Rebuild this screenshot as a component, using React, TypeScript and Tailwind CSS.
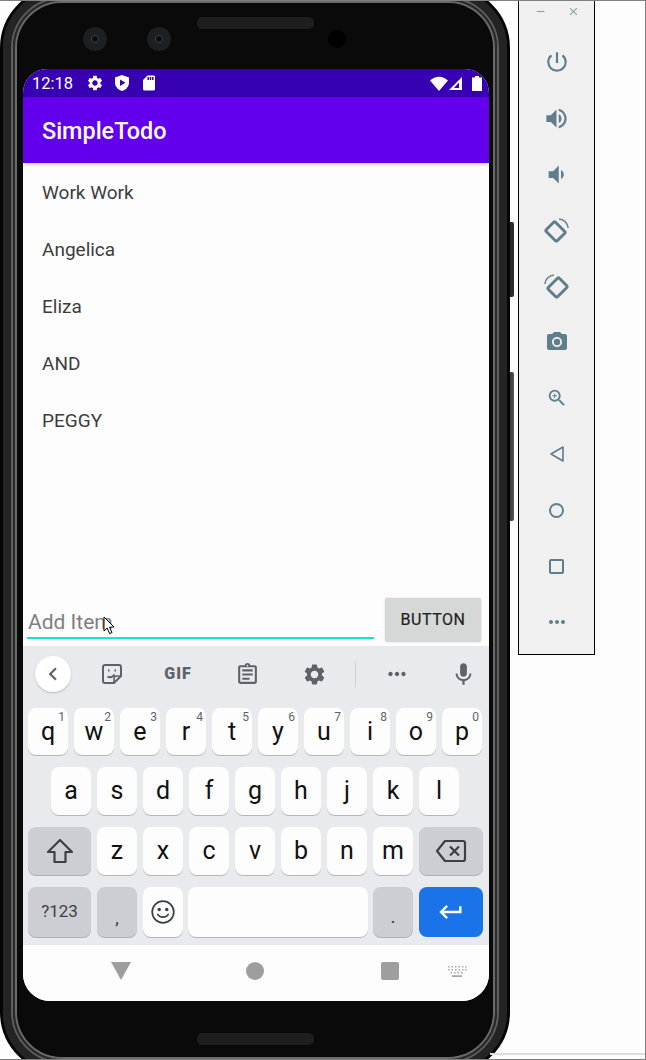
import { MdSettings, MdSdCard, MdPowerSettingsNew, MdVolumeUp, MdVolumeDown, MdPhotoCamera, MdZoomIn, MdMoreHoriz, MdChevronLeft, MdMic, MdOutlineAssignment, MdKeyboardReturn, MdClose, MdRemove } from 'react-icons/md';

const todos = ['Work Work', 'Angelica', 'Eliza', 'AND', 'PEGGY'];
const row1 = [['q', '1'], ['w', '2'], ['e', '3'], ['r', '4'], ['t', '5'], ['y', '6'], ['u', '7'], ['i', '8'], ['o', '9'], ['p', '0']];
const row2 = ['a', 's', 'd', 'f', 'g', 'h', 'j', 'k', 'l'];
const row3 = ['z', 'x', 'c', 'v', 'b', 'n', 'm'];

function Key({ label, hint }: { label: string; hint?: string }) {
  return (
    <div className="relative flex h-full w-[40px] items-center justify-center rounded-[8px] bg-[#fdfdfd] pb-[1px] text-[25px] leading-none text-[#111] shadow-[0_1px_0_#b4b6ba]">
      {label}
      {hint && <span className="absolute right-[3px] top-[3px] text-[12px] leading-none text-[#5f6368]">{hint}</span>}
    </div>
  );
}

function GrayKey({ className, children }: { className: string; children: React.ReactNode }) {
  return (
    <div className={`flex h-full items-center justify-center rounded-[8px] bg-[#ccced4] text-[#3c4043] shadow-[0_1px_0_#aeb0b5] ${className}`}>
      {children}
    </div>
  );
}

function RotateIcon({ flip }: { flip?: boolean }) {
  return (
    <svg width="25" height="25" viewBox="0 0 24 24" fill="none" stroke="#607d8b" className={flip ? '-scale-x-100' : ''}>
      <rect x="4.700" y="5.500" width="12.600" height="15" rx="1.200" strokeWidth="2.800" transform="rotate(-45 11 13)" />
      <path d="M14.500 1 C19 1.300 22.800 5 23.200 9.600" strokeWidth="1.400" />
    </svg>
  );
}

function PanelCell({ children }: { children: React.ReactNode }) {
  return <div className="flex h-[56px] items-center justify-center text-[#607d8b]">{children}</div>;
}

function Speaker() {
  return <div className="h-[12px] w-[117px] rounded-[5px] bg-[#1e1e1e]" />;
}

function Camera() {
  return (
    <div className="flex h-[24px] w-[24px] items-center justify-center rounded-full bg-[#1c2023]">
      <div className="h-[8px] w-[8px] rounded-full border border-[#3f4245] bg-[#0c0c0c]" />
    </div>
  );
}

function StatusBar() {
  return (
    <div className="flex h-[28px] items-center bg-[#3700b3] pl-[9px] text-white">
      <span className="w-[54px] pt-[2px] text-[16.5px] leading-none">12:18</span>
      <MdSettings size={18} />
      <svg width="16" height="18" viewBox="0 0 16 18" className="ml-[10px]" fill="#fff">
        <path d="M8 1 L15 3.600 V8.500 C15 12.600 12 15.900 8 17 C4 15.900 1 12.600 1 8.500 V3.600 Z" />
        <path d="M6 5.600 L11.500 8.800 L6 12 Z" fill="#3700b3" />
      </svg>
      <MdSdCard size={18} className="ml-[10px]" />
      <div className="ml-auto mr-[7px] flex items-center">
        <svg width="18" height="15" viewBox="0 0 18 15" fill="#fff"><path d="M0 4.500 C5 -0.600 13 -0.600 18 4.500 L9 15 Z" /></svg>
        <svg width="15" height="15" viewBox="0 0 15 15" fill="none">
          <path d="M14 1 V14 H1 Z" fill="#fff" />
          <path d="M11 6.500 V12 H6 Z" fill="#3700b3" />
          <path d="M12 5 H14 V14 H12 Z" fill="#fff" />
        </svg>
        <svg width="10" height="15" viewBox="0 0 10 15" className="ml-[9px]" fill="#fff"><path d="M3 0 H7 V1.500 H10 V15 H0 V1.500 H3 Z" /></svg>
      </div>
    </div>
  );
}

function InputRow() {
  return (
    <div className="relative flex h-[51px] shrink-0 items-start pl-[4px]">
      <input
        readOnly
        placeholder="Add Item"
        className="mt-[11px] h-[33px] w-[347px] border-b-[2px] border-[#12e6cf] bg-transparent pl-[1px] text-[21px] outline-none placeholder:text-[#808080]"
      />
      <button className="ml-[11px] mt-[3px] h-[44px] w-[96px] rounded-[2px] bg-[#d6d7d7] text-[16px] tracking-[0.5px] text-[#222] [-webkit-text-stroke:0.2px_#222] shadow-[0_0_2px_#cfcfcf]">
        BUTTON
      </button>
      <svg width="13" height="19" viewBox="0 0 13 19" className="absolute left-[80px] top-[21px]" fill="#fff" stroke="#000" strokeWidth="1">
        <path d="M1 1 V15 L4.200 12 L6.600 17.600 L9 16.600 L6.600 11.200 L11 11 Z" />
      </svg>
    </div>
  );
}

function Toolbar() {
  return (
    <div className="flex h-[62px] items-center pb-[6px] pl-[12px] text-[#5f6368]">
      <div className="flex h-[36px] w-[36px] items-center justify-center rounded-full bg-white shadow-[0_1px_2px_#b9bbbf]">
        <MdChevronLeft size={26} />
      </div>
      <div className="ml-[16px] flex w-[50px] justify-center">
        <svg width="22" height="22" viewBox="0 0 22 22" fill="none" stroke="#5f6368" strokeWidth="2">
          <path d="M4 2 H18 C19.200 2 20 2.800 20 4 V13 L13 20 H4 C2.800 20 2 19.200 2 18 V4 C2 2.800 2.800 2 4 2 Z" />
          <path d="M13 20 V15.500 C13 14 14 13 15.500 13 H20" strokeWidth="1.600" />
          <path d="M6.500 13.500 C9 15 12 14 13.500 11.500" />
          <path d="M7 7.500 H8.500 M13.500 7.500 H15" strokeWidth="2.200" />
        </svg>
      </div>
      <div className="ml-[16px] flex w-[50px] justify-center text-[16px] font-black tracking-[1px]">GIF</div>
      <div className="ml-[19px] flex w-[50px] justify-center"><MdOutlineAssignment size={25} /></div>
      <div className="ml-[17px] flex w-[50px] justify-center"><MdSettings size={25} /></div>
      <div className="ml-[16px] h-[26px] w-[1px] bg-[#cfd1d5]" />
      <div className="ml-[16px] flex w-[50px] justify-center"><MdMoreHoriz size={26} /></div>
      <div className="ml-[16px] flex w-[50px] justify-center"><MdMic size={27} /></div>
    </div>
  );
}

function Keyboard() {
  return (
    <div className="shrink-0 bg-[#e8eaed]">
      <Toolbar />
      <div className="flex h-[229px] flex-col gap-[12px] px-[5px]">
        <div className="flex h-[47px] gap-[6px]">
          {row1.map(([k, h]) => <Key key={k} label={k} hint={h} />)}
        </div>
        <div className="flex h-[48px] gap-[6px] pl-[23px]">
          {row2.map((k) => <Key key={k} label={k} />)}
        </div>
        <div className="flex h-[48px] gap-[6px]">
          <GrayKey className="w-[63px]">
            <svg width="28" height="26" viewBox="0 0 28 26" fill="none" stroke="#3c4043" strokeWidth="2.200" strokeLinejoin="round"><path d="M14 2 L26 14 H19.500 V24 H8.500 V14 H2 Z" /></svg>
          </GrayKey>
          {row3.map((k) => <Key key={k} label={k} />)}
          <GrayKey className="w-[64px]">
            <svg width="32" height="24" viewBox="0 0 32 24" fill="none" stroke="#3c4043" strokeWidth="2.200" strokeLinejoin="round">
              <path d="M10 2 H28 C29.200 2 30 2.800 30 4 V20 C30 21.200 29.200 22 28 22 H10 L2 12 Z" />
              <path d="M15 7.500 L24 16.500 M24 7.500 L15 16.500" />
            </svg>
          </GrayKey>
        </div>
        <div className="flex h-[50px] gap-[6px]">
          <GrayKey className="w-[63px] text-[17px]">?123</GrayKey>
          <GrayKey className="w-[40px] pt-[13px] text-[16px] font-medium leading-none">,</GrayKey>
          <div className="flex h-full w-[40px] items-center justify-center rounded-[8px] bg-[#fdfdfd] shadow-[0_1px_0_#b4b6ba]">
            <svg width="24" height="24" viewBox="0 0 24 24" fill="none" stroke="#3c4043" strokeWidth="1.700">
              <circle cx="12" cy="12" r="10.800" />
              <circle cx="8.200" cy="9.500" r="0.900" fill="#3c4043" />
              <circle cx="15.800" cy="9.500" r="0.900" fill="#3c4043" />
              <path d="M6.800 14.500 C8.500 18 15.500 18 17.200 14.500" strokeLinecap="round" />
            </svg>
          </div>
          <div className="h-full w-[180px] -ml-[1px] rounded-[8px] bg-[#fdfdfd] shadow-[0_1px_0_#b4b6ba]" />
          <GrayKey className="-ml-[1px] w-[40px] pt-[11px] text-[14px] font-bold leading-none">.</GrayKey>
          <div className="flex h-full w-[64px] items-center justify-center rounded-[8px] bg-[#1a73e8] text-white">
            <MdKeyboardReturn size={28} />
          </div>
        </div>
      </div>
      <div className="h-[8px]" />
    </div>
  );
}

function NavBar() {
  return (
    <div className="flex h-[56px] shrink-0 items-center bg-[#fdfdfd] pb-[4px] pl-[88px]">
      <svg width="20" height="18" viewBox="0 0 20 18" fill="#9e9e9e"><path d="M0 0 H20 L10 18 Z" /></svg>
      <div className="ml-[115px] h-[18px] w-[18px] rounded-full bg-[#9e9e9e]" />
      <div className="ml-[117px] h-[18px] w-[18px] rounded-[2px] bg-[#9e9e9e]" />
      <svg width="20" height="11" viewBox="0 0 20 11" className="ml-[48px]" fill="#a8a8a8">
        <path d="M1 0h1.500v1.400H1zM4.500 0H6v1.400H4.500zM8 0h1.500v1.400H8zM11.500 0H13v1.400h-1.500zM15 0h1.500v1.400H15zM18 0h1.500v1.400H18zM1 3h1.500v1.400H1zM4.500 3H6v1.400H4.500zM8 3h1.500v1.400H8zM11.500 3H13v1.400h-1.500zM15 3h1.500v1.400H15zM18 3h1.500v1.400H18zM3.500 6H5v1.400H3.500zM7 6h1.500v1.400H7zM10.500 6H12v1.400h-1.500zM14 6h1.500v1.400H14zM5 9.300h10V11H5z" />
      </svg>
    </div>
  );
}

function Phone() {
  return (
    <div className="relative -mt-[14px] h-[1088px] w-[510px] shrink-0">
      <div className="absolute -right-[4px] top-[236px] h-[75px] w-[8px] rounded-r-[2px] bg-[#2b2b2b]" />
      <div className="absolute -right-[4px] top-[386px] h-[149px] w-[8px] rounded-r-[2px] bg-[linear-gradient(90deg,#222,#555)]" />
      <div className="relative h-full rounded-[62px] border-[3px] border-[#050505] bg-[#262626]">
        <div className="h-full rounded-[59px] border-[8px] border-[#242424]">
          <div className="h-full rounded-[51px] border-[2px] border-[#5e5e5e]">
            <div className="h-full rounded-[49px] border-[2px] border-[#2a2a2a]">
              <div className="h-full rounded-[47px] border-[2px] border-[#6a6a6a]">
                <div className="flex h-full flex-col rounded-[45px] bg-[#0a0a0a] pl-[6px] pr-[4px]">
                  <div className="flex h-[66px] shrink-0 items-start">
                    <div className="ml-[60px] mt-[24px]"><Camera /></div>
                    <div className="ml-[40px] mt-[24px]"><Camera /></div>
                    <div className="ml-[26px] mt-[14px]"><Speaker /></div>
                    <div className="ml-[14px] mt-[27px] h-[18px] w-[18px] rounded-full bg-black" />
                  </div>
                  <div className="flex h-[932px] shrink-0 flex-col overflow-hidden rounded-b-[27px] rounded-t-[24px] bg-[#fdfdfd]">
                    <StatusBar />
                    <div className="relative z-10 flex h-[66px] shrink-0 items-center bg-[#6200ee] pl-[19px] pt-[3px] text-[23.4px] font-medium text-white shadow-[0_2px_3px_rgba(0,0,0,0.18)]">
                      SimpleTodo
                    </div>
                    <div className="flex-1 pt-[2px]">
                      {todos.map((t) => (
                        <div key={t} className="flex h-[57px] items-center pl-[19px] text-[19px] text-[#3d3d3d]">{t}</div>
                      ))}
                    </div>
                    <InputRow />
                    <Keyboard />
                    <NavBar />
                  </div>
                  <div className="ml-[174px] mt-[32px]"><Speaker /></div>
                </div>
              </div>
            </div>
          </div>
        </div>
      </div>
    </div>
  );
}

function EmulatorPanel() {
  return (
    <div className="h-[655px] w-[77px] border border-t-0 border-black bg-[#f0f0f0]">
      <div className="flex h-[34px] items-start justify-center gap-[20px] pt-[5px] text-[#8ba0ab]">
        <MdRemove size={13} />
        <MdClose size={13} />
      </div>
      <PanelCell><MdPowerSettingsNew size={26} /></PanelCell>
      <PanelCell><MdVolumeUp size={27} /></PanelCell>
      <PanelCell><MdVolumeDown size={27} /></PanelCell>
      <PanelCell><RotateIcon /></PanelCell>
      <PanelCell><RotateIcon flip /></PanelCell>
      <PanelCell><MdPhotoCamera size={24} /></PanelCell>
      <PanelCell><MdZoomIn size={22} /></PanelCell>
      <PanelCell>
        <svg width="14" height="16" viewBox="0 0 14 16" fill="none" stroke="#607d8b" strokeWidth="1.600" strokeLinejoin="round"><path d="M13 1 V15 L1 8 Z" /></svg>
      </PanelCell>
      <PanelCell><div className="h-[15px] w-[15px] rounded-full border-[2px] border-[#607d8b]" /></PanelCell>
      <PanelCell><div className="h-[15px] w-[15px] rounded-[2px] border-[2px] border-[#607d8b]" /></PanelCell>
      <PanelCell><MdMoreHoriz size={24} /></PanelCell>
    </div>
  );
}

export default function App() {
  return (
    <div className="relative flex h-[1060px] w-[646px] overflow-hidden bg-[#fdfdfd] font-['Roboto',sans-serif]">
      <Phone />
      <div className="ml-[8px] flex flex-1 flex-col">
        <EmulatorPanel />
      </div>
      <div className="absolute bottom-[5px] left-[490px] right-0 h-[2px] bg-[#dddde0]" />
      <div className="pointer-events-none absolute inset-0 border-y border-r border-[#808080]" />
    </div>
  );
}
